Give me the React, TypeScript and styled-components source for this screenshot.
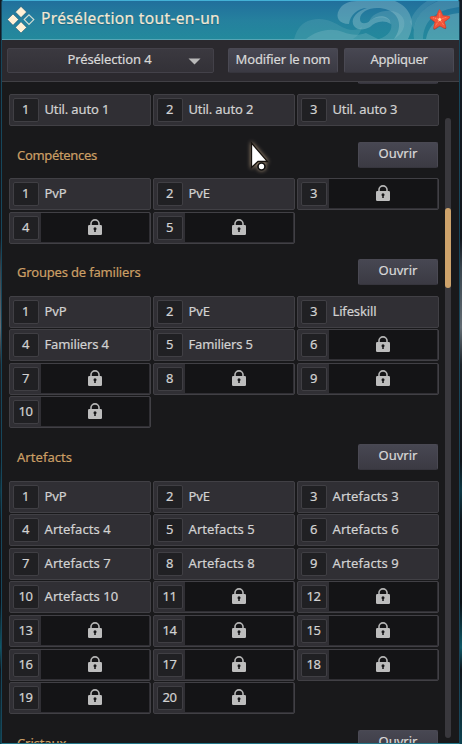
import React from "react";
import styled, { createGlobalStyle } from "styled-components";

const GlobalStyle = createGlobalStyle`
  * { box-sizing: border-box; }
  html, body { margin: 0; padding: 0; background: #0b0e13; overflow: hidden; }
  body {
    font-family: "Noto Sans", "Open Sans", sans-serif;
    font-size: 13px;
    color: #d2d2d2;
    -webkit-text-stroke: 0.2px currentColor;
  }
`;

const Scene = styled.div`
  width: 462px;
  height: 744px;
  padding: 0 2px 0 1px;
  background:
    linear-gradient(#141b24 0, #12161c 32%, #38434c 36%, #626b72 44%, #1d2329 49%, #10141a 62%, #0d3845 66%, #10151b 70%, #0b1016 81%, #0e5968 87%, #10151b 90%, #0d4351 100%);
`;

const Window = styled.main`
  display: flex;
  flex-direction: column;
  height: 744px;
  border: 1px solid #17465a;
  border-top: 0;
  border-bottom-color: #24788a;
  border-radius: 2px 2px 0 0;
  background: #19191b;
  overflow: hidden;
`;

const TitleBar = styled.header`
  position: relative;
  display: flex;
  flex: none;
  align-items: center;
  height: 40px;
  padding: 0 8px 0 5px;
  border-top: 1px solid #43b1d6;
  border-bottom: 1px solid #57a5b5;
  background: linear-gradient(#216f9c, #25809e 50%, #23899c);
`;

const Waves = styled.svg`
  position: absolute;
  top: 0;
  right: 0;
`;

const Title = styled.h1`
  position: relative;
  flex: 1;
  margin: 0 0 4px 6px;
  font-size: 15.5px;
  font-weight: 400;
  line-height: 20px;
  letter-spacing: 0.36px;
  color: #f3e8d3;
  text-shadow: 0 1px 1px #12405a80;
  white-space: nowrap;
`;

const Star = styled.svg`
  position: relative;
  flex: none;
`;

const Toolbar = styled.div`
  display: grid;
  grid-template-columns: 207px 110px 110px;
  column-gap: 14px;
  flex: none;
  height: 42px;
  padding: 8px 0 0 5px;
  border-bottom: 1px solid #414045;
  background: #2b292e;

  & > :last-child { margin-left: -8px; margin-right: 8px; }
`;

const Button = styled.button<{ $spacing?: number }>`
  display: flex;
  align-items: center;
  justify-content: center;
  height: 25px;
  padding: 0 0 3px;
  border: 1px solid #4a4953;
  border-bottom-color: #36353d;
  border-radius: 2px;
  background: linear-gradient(#474752, #3b3a43);
  color: #d8d8d8;
  font: inherit;
  line-height: 18px;
  letter-spacing: ${(p) => p.$spacing ?? 0}px;
  white-space: nowrap;
`;

const Select = styled(Button)`
  position: relative;
  padding-right: 2px;
  border-color: #434149;
  background: linear-gradient(#3b3940, #333137);
`;

const Caret = styled.svg`
  position: absolute;
  right: 12px;
  top: 9px;
`;

const Body = styled.div`
  display: grid;
  grid-template-columns: 437px 6px;
  column-gap: 6px;
  flex: 1;
  min-height: 0;
  overflow: hidden;
`;

const Content = styled.div`
  min-height: 0;
  padding-left: 7px;
  overflow: hidden;
`;

const PreviousButtonRow = styled.div`
  display: flex;
  justify-content: flex-end;
  align-items: flex-end;
  height: 2px;
  margin-bottom: 10px;
  padding-right: 1px;
`;

const Section = styled.section<{ $gap: number }>`
  padding-top: ${(p) => p.$gap}px;
`;

const SectionHead = styled.div<{ $below: number }>`
  display: flex;
  justify-content: space-between;
  width: 429px;
  height: 26px;
  margin-bottom: ${(p) => p.$below}px;
  padding-left: 8px;
`;

const Heading = styled.h2<{ $spacing: number }>`
  margin: 3.5px 0 0;
  font-size: 13px;
  font-weight: 400;
  line-height: 18px;
  letter-spacing: ${(p) => p.$spacing}px;
  color: #cb9f65;
  white-space: nowrap;
`;

const OpenButton = styled(Button)`
  width: 80px;
  height: 26px;
  padding-bottom: 4px;
`;

const Slots = styled.div`
  display: grid;
  grid-template-columns: repeat(3, 142px);
  grid-auto-rows: 32px;
  gap: 1.6px 2px;
`;

const Slot = styled.div`
  display: flex;
  align-items: flex-start;
  padding: 3px 1px 0 3px;
  border: 1px solid #414045;
  border-radius: 2px;
  background: #302f34;
`;

const SlotNumber = styled.span`
  flex: none;
  width: 26px;
  height: 24px;
  padding-right: 1px;
  border: 1px solid #403f44;
  border-radius: 2px;
  background: #202023;
  line-height: 21px;
  letter-spacing: -0.4px;
  text-align: center;
`;

const SlotName = styled.span<{ $spacing: number }>`
  margin-left: 5.5px;
  line-height: 23px;
  letter-spacing: ${(p) => p.$spacing}px;
  white-space: nowrap;
`;

const LockedArea = styled.span`
  display: flex;
  flex: 1;
  justify-content: center;
  height: 29px;
  margin: -3px 0 0 2px;
  padding-top: 6px;
  background: #141416;
`;

const Track = styled.div`
  height: 620px;
  margin-top: 36px;
  padding-top: 90px;
  border-radius: 3px;
  background: #39383d;
`;

const Thumb = styled.div`
  height: 80px;
  border-radius: 3px;
  background: #cda26b;
`;

const Pointer = styled.svg`
  position: absolute;
  left: 246px;
  top: 138px;
  filter: drop-shadow(0 0 2px #b29b80);
`;

const LogoIcon = () => (
  <svg width="28" height="30" viewBox="0 0 28 30">
    <g stroke="#174f6c" strokeWidth="0.5">
      <path d="M14 1.4 19.6 7 14 12.6 8.4 7Z" fill="#fff0d6" />
      <path d="M6 9 11.6 14.6 6 20.2.4 14.6Z" fill="#fff0d6" />
      <path d="M14 16.8 19.6 22.4 14 28 8.4 22.4Z" fill="#fff0d6" />
    </g>
    <path d="M22 9.8 26.8 14.6 22 19.4 17.2 14.6Z" fill="none" stroke="#cfdcd3" strokeWidth="1.2" />
  </svg>
);

const LockIcon = () => (
  <svg width="14" height="16" viewBox="0 0 14 16">
    <path d="M3 6.4V4.6a4 3.7 0 0 1 8 0v1.8" fill="none" stroke="#b4b4b4" strokeWidth="1.6" />
    <rect x="0" y="6" width="14" height="10" rx="1.2" fill="#bdbdbd" />
    <circle cx="7" cy="9.8" r="1.5" fill="#161618" />
    <path d="M6.4 10h1.2l.2 3H6.2Z" fill="#161618" />
  </svg>
);

const HeaderWaves = () => (
  <Waves width="170" height="38" viewBox="289 1 170 38">
    <g fill="#a9d3d8">
      <path opacity=".14" d="M294 39c3-10 8-17 17-19 14-3 22 2 31 7 8 4 14 4 20 0-1 5-4 9-9 12Z" />
      <path opacity=".22" d="M306 39c10-8 24-12 37-7 8 3 15 4 23 1l12 6Z" />
      <path opacity=".34" d="M349 24c-10 0-14-7-10-14 3-6 10-9 18-9h38c15 6 22 21 13 38h-14c8-10 7-24-6-29-13-5-28 0-28 9 0 6 7 5 11 1 7-6 19-5 20 4-8-5-16-2-21 3-7 4-15 3-17-3-2-7 5-13 14-16-9 0-17 7-18 16Z" />
      <path opacity=".2" d="M369 22c6-6 19-6 22 1 2 7-3 13-12 16h15c12-7 14-20 4-26-10-5-26-1-29 9Z" />
      <path opacity=".22" d="M414 39c-2-18 7-31 24-38h21v6c-22 3-35 12-36 32Z" />
      <path opacity=".3" d="M426 39c3-16 15-24 33-26v26Z" />
      <path opacity=".16" d="M410 22c3-9 8-15 17-21h10c-13 6-21 15-23 29Z" />
    </g>
  </Waves>
);

const Starfish = () => (
  <Star width="22" height="22" viewBox="0 0 22 22">
    <path d="M11.2 2 13.2 7.6 20.4 7.8Q21.2 8.8 20 9.7L15.4 13 17.3 19Q17 20.6 15.6 20L11 17.2 5.7 20.8Q4.2 21 4.4 19.4L6.2 13.8 1.2 10Q.5 8.6 2 8.3L8 8.1 9.8 2.3Q10.5 1 11.2 2Z" fill="#5c3440" opacity=".6" />
    <path d="M11.4 1.2 13.9 6.8 20.2 7.3Q21.2 8.3 20 9.2L15.3 12.8 16.8 18.3Q16.5 19.7 15.1 19L10.7 16.7 6 19.6Q4.6 20 4.8 18.5L6.1 13 1.3 9.3Q.7 8 2 7.6L7.6 7.2 9.8 1.5Q10.5.3 11.4 1.2Z" fill="#f4543a" stroke="#e0442f" strokeWidth=".8" />
    <g stroke="#ff9d78" strokeWidth="1" strokeDasharray="1 1">
      <path d="M10.7 10.5V4M10.7 10.5l6.6-2.2M10.7 10.5l4 5.6M10.7 10.5l-4 5.9M10.7 10.5 4.2 8.7" />
    </g>
    <circle cx="10.7" cy="10.5" r="1.5" fill="#ffe1b3" />
  </Star>
);

type Group = { title: string; spacing: number; gap: number; below: number; total: number; names: string[] };

const groups: Group[] = [
  { title: "Compétences", spacing: -0.33, gap: 16, below: 10, total: 5, names: ["PvP", "PvE"] },
  { title: "Groupes de familiers", spacing: -0.18, gap: 15.6, below: 10.5, total: 10, names: ["PvP", "PvE", "Lifeskill", "Familiers 4", "Familiers 5"] },
  {
    title: "Artefacts", spacing: 0.05, gap: 15.6, below: 10.6, total: 20,
    names: ["PvP", "PvE", ...Array.from({ length: 8 }, (_, i) => `Artefacts ${i + 3}`)],
  },
];

const spacingFor = (name: string) => (name.startsWith("Artefacts") ? 0.08 : -0.15);

const SlotGrid = ({ names, total }: { names: string[]; total: number }) => (
  <Slots>
    {Array.from({ length: total }, (_, i) => (
      <Slot key={i}>
        <SlotNumber>{i + 1}</SlotNumber>
        {names[i] ? (
          <SlotName $spacing={spacingFor(names[i])}>{names[i]}</SlotName>
        ) : (
          <LockedArea><LockIcon /></LockedArea>
        )}
      </Slot>
    ))}
  </Slots>
);

export default function App() {
  return (
    <Scene>
      <GlobalStyle />
      <Window>
        <TitleBar>
          <HeaderWaves />
          <LogoIcon />
          <Title>Présélection tout-en-un</Title>
          <Starfish />
        </TitleBar>
        <Toolbar>
          <Select $spacing={-0.1}>
            Présélection 4
            <Caret width="13" height="7"><path d="M.5.5h12L6.5 6.5Z" fill="#b9b9b9" /></Caret>
          </Select>
          <Button $spacing={-0.15}>Modifier le nom</Button>
          <Button $spacing={-0.3}>Appliquer</Button>
        </Toolbar>
        <Body>
          <Content>
            <PreviousButtonRow><OpenButton aria-label="Ouvrir" /></PreviousButtonRow>
            <SlotGrid names={["Util. auto 1", "Util. auto 2", "Util. auto 3"]} total={3} />
            {groups.map((g) => (
              <Section key={g.title} $gap={g.gap}>
                <SectionHead $below={g.below}>
                  <Heading $spacing={g.spacing}>{g.title}</Heading>
                  <OpenButton>Ouvrir</OpenButton>
                </SectionHead>
                <SlotGrid names={g.names} total={g.total} />
              </Section>
            ))}
            <Section $gap={16}>
              <SectionHead $below={0}>
                <Heading $spacing={-0.1}>Cristaux</Heading>
                <OpenButton>Ouvrir</OpenButton>
              </SectionHead>
            </Section>
          </Content>
          <Track><Thumb /></Track>
        </Body>
      </Window>
      <Pointer width="26" height="36" viewBox="0 0 26 36">
        <path d="M5.5 5v24.5l6.5-6h9.5Z" fill="#fff" stroke="#17130f" strokeWidth="1.3" />
        <circle cx="15.5" cy="28.5" r="3.5" fill="#fff" stroke="#111" strokeWidth="1.7" />
      </Pointer>
    </Scene>
  );
}
